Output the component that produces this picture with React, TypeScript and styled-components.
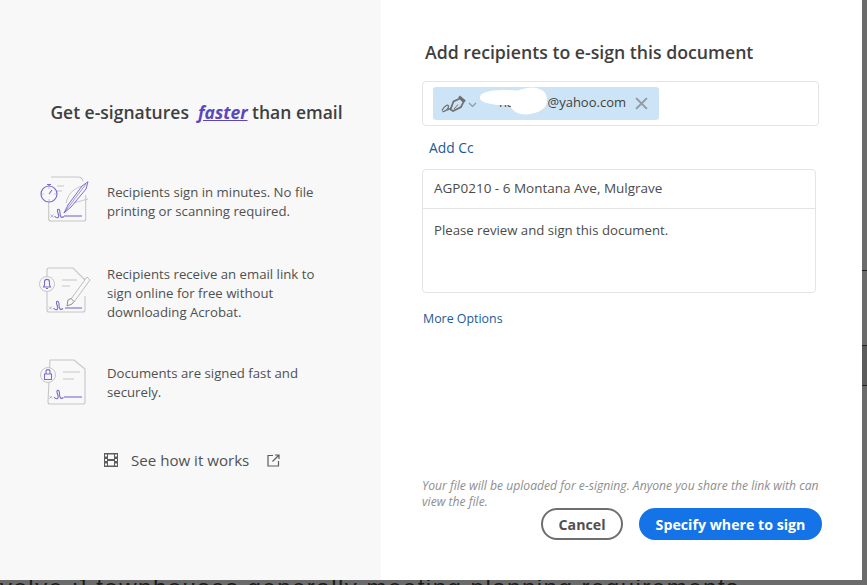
import React from "react";
import styled, { createGlobalStyle } from "styled-components";

const GlobalStyle = createGlobalStyle`
  html, body {
    margin: 0;
    padding: 0;
    height: 585px;
    overflow: hidden;
    background: #6b6b6b;
    font-family: "Open Sans", "Noto Sans", "Liberation Sans", sans-serif;
  }
  * { box-sizing: border-box; }
`;

const Page = styled.div`
  width: 867px;
  height: 585px;
  overflow: hidden;
  display: flex;
  flex-direction: column;
`;

const TopRow = styled.div`
  display: flex;
  height: 580px;
  flex: none;
`;

const Dialog = styled.div`
  width: 862px;
  display: flex;
`;

const Strip = styled.div`
  flex: 1;
  display: flex;
  flex-direction: column;
`;

const StripPart = styled.div<{ $h: number; $dark?: boolean }>`
  height: ${(p) => p.$h}px;
  flex: none;
  background: ${(p) => (p.$dark ? "#5c5c5c" : "#6b6b6b")};
  border-bottom: 1px solid #222;
`;

const BehindText = styled.div`
  height: 5px;
  flex: none;
  overflow: hidden;
  font-family: "Liberation Sans", sans-serif;
  font-size: 24px;
  line-height: 16px;
  letter-spacing: 1.5px;
  white-space: nowrap;
  color: #1c1c1c;
`;

const Left = styled.div`
  width: 381px;
  background: #f8f8f8;
  padding-top: 100px;
  display: flex;
  flex-direction: column;
`;

const Pitch = styled.h2`
  margin: 0 0 49px;
  text-align: center;
  font-size: 17.5px;
  line-height: 24px;
  font-weight: 600;
  color: #3f3f3f;
  padding-left: 12px;
  white-space: pre;

  em {
    color: #5a46c0;
    text-decoration: underline;
    font-weight: 700;
  }
`;

const Benefits = styled.div`
  display: flex;
  flex-direction: column;
  padding-left: 40px;
`;

const Benefit = styled.div<{ $h: number }>`
  display: flex;
  gap: 17px;
  height: ${(p) => p.$h}px;
`;

const BenefitIcon = styled.svg`
  width: 50px;
  height: 50px;
  flex: none;
  fill: none;
  overflow: visible;
`;

const BenefitText = styled.p<{ $top: number }>`
  margin: 0;
  padding-top: ${(p) => p.$top}px;
  width: 225px;
  font-size: 13.2px;
  line-height: 19.2px;
  color: #505050;
`;

const Watch = styled.div`
  display: flex;
  align-items: center;
  margin: 15px 0 0 104px;
  height: 24px;
  font-size: 15.1px;
  color: #505050;
`;

const WatchLabel = styled.span`
  margin: 0 18px 0 13px;
`;

const Right = styled.div`
  flex: 1;
  background: #fff;
  padding: 40px 0 0 41px;
  display: flex;
  flex-direction: column;
`;

const Title = styled.h1`
  margin: 0 0 17px 3px;
  font-size: 17.7px;
  line-height: 24px;
  font-weight: 600;
  color: #3f3f3f;
`;

const RecipientBox = styled.div`
  width: 397px;
  height: 45px;
  border: 1px solid #e4e4e4;
  border-radius: 4px;
  padding: 5px 10px;
`;

const Chip = styled.div`
  position: relative;
  width: 226px;
  height: 33px;
  border-radius: 3px;
  background: #cde4f7;
  display: flex;
  align-items: center;
  padding-left: 8px;
  font-size: 13px;
  color: #3f3f3f;
`;

const ChipEmail = styled.span`
  margin: 0 0 3px 4px;
  width: 145px;
  padding-left: 18px;
  display: flex;
  justify-content: space-between;
`;

const Redaction = styled.div<{ $x: number; $y: number; $w: number; $h: number; $tilt?: number }>`
  position: absolute;
  left: ${(p) => p.$x}px;
  top: ${(p) => p.$y}px;
  width: ${(p) => p.$w}px;
  height: ${(p) => p.$h}px;
  background: #fff;
  border-radius: 45%;
  transform: rotate(${(p) => p.$tilt ?? 0}deg);
`;

const LinkText = styled.a<{ $ml: number; $mt: number; $size: number }>`
  display: block;
  margin: ${(p) => p.$mt}px 0 0 ${(p) => p.$ml}px;
  font-size: ${(p) => p.$size}px;
  line-height: 18px;
  color: #1a5a96;
`;

const MessageBox = styled.div`
  margin-top: 12px;
  width: 394px;
  height: 124px;
  border: 1px solid #e4e4e4;
  border-radius: 4px;
  line-height: 18px;
  color: #4b4b4b;
`;

const Subject = styled.div`
  height: 39px;
  padding: 9px 11px 0;
  font-size: 13.5px;
  border-bottom: 1px solid #e4e4e4;
`;

const Message = styled.div`
  padding: 12px 11px 0;
  font-size: 13.2px;
`;

const Footer = styled.div`
  margin-top: auto;
  padding-bottom: 40px;
`;

const Notice = styled.p`
  margin: 0;
  width: 400px;
  font-size: 12.15px;
  line-height: 16px;
  font-style: italic;
  color: #8e8e8e;
`;

const Actions = styled.div`
  display: flex;
  gap: 16px;
  margin: -2px 0 0 119px;
`;

const Button = styled.button<{ $primary?: boolean }>`
  height: 32px;
  padding: 0;
  width: ${(p) => (p.$primary ? 183 : 82)}px;
  border-radius: 16px;
  border: 2px solid ${(p) => (p.$primary ? "#1473e6" : "#6e6e6e")};
  background: ${(p) => (p.$primary ? "#1473e6" : "#fff")};
  color: ${(p) => (p.$primary ? "#fff" : "#505050")};
  font-family: inherit;
  font-size: 14.2px;
  font-weight: 700;
`;

const PURPLE = "#7a6bd0";
const GREY = "#c6c6c6";

const StopwatchIcon = () => (
  <BenefitIcon viewBox="0 0 50 50">
    <path d="M11 4 H38 Q42 4 43 8 M45.7 22 V46 Q45.7 48 43.7 48 H10.7 Q8.7 48 8.7 46 V28" stroke={GREY} strokeWidth="1.1" />
    <path d="M17 13 H24 M17 18 H22" stroke={GREY} />
    <path d="M10.5 41.5 l3 3 M13.5 41.5 l-3 3" stroke="#aaa" strokeWidth="0.8" />
    <path d="M14.5 43 C17 46 20 45 18 40 C16 35 20 35 20 40 C20 45 22 45 24 43.5" stroke={PURPLE} strokeWidth="1.1" />
    <path d="M24 43 H42" stroke={PURPLE} strokeWidth="1.1" />
    <path d="M26 30 C28 22 32 16 42 13" stroke={GREY} />
    <path d="M27 32 C34 30 40 28 48 26" stroke={GREY} />
    <path d="M24 40 L28 32 L42 13 L48 8.7 L46 16 L31 34 Z" fill="#f8f8f8" stroke={PURPLE} />
    <path d="M24 40 L46 11" stroke={PURPLE} strokeWidth="0.7" />
    <circle cx="9" cy="21" r="8" stroke={PURPLE} strokeWidth="1.2" fill="#f8f8f8" />
    <path d="M9 21 L12 17 M7 11.5 H11 M9 11.5 V13" stroke={PURPLE} strokeWidth="1.1" />
    <path d="M9 14.5 V15.5 M9 26.5 V27.5 M2.5 21 H3.5 M14.5 21 H15.5" stroke={PURPLE} strokeWidth="0.8" />
  </BenefitIcon>
);

const BellIcon = () => (
  <BenefitIcon viewBox="0 0 50 50">
    <path d="M9 5 H33 L45 17 M45 33 V47 Q45 49 43 49 H9 Q7 49 7 47 V29 M7 13 V7 Q7 5 9 5" stroke={GREY} strokeWidth="1.1" />
    <path d="M22 17 H37 M22 23 H30" stroke={GREY} />
    <circle cx="7" cy="21" r="7.5" stroke={GREY} fill="#f8f8f8" />
    <path d="M3.5 24 H10.5 L9.5 22 V19 C9.5 15.5 4.5 15.5 4.5 19 V22 Z M6 25.5 H8" stroke={PURPLE} strokeWidth="1.1" />
    <path d="M9 43.5 l3 3 M12 43.5 l-3 3" stroke="#aaa" strokeWidth="0.8" />
    <path d="M13.5 45 C16 48 19 47 17 42 C15 37 19 37 19 42 C19 47 21 47 23 45.5" stroke={PURPLE} strokeWidth="1.1" />
    <path d="M25 45 H42" stroke={PURPLE} strokeWidth="1.1" />
    <path d="M31 36 L47 14 L50 17 L34 39 Z" fill="#f8f8f8" stroke="#bdbdbd" />
    <path d="M27 43 L28 37 L31 35.5 L34 38.5 L32 41 Z" fill="#f8f8f8" stroke="#8d8d8d" />
  </BenefitIcon>
);

const LockIcon = () => (
  <BenefitIcon viewBox="0 0 50 50">
    <path d="M10 4 H34 L45 13 V46 Q45 48 43 48 H10 Q8 48 8 46 Z" stroke={GREY} strokeWidth="1.1" />
    <path d="M23 16 H40 M23 23 H34" stroke={GREY} />
    <circle cx="8" cy="19" r="7.5" stroke={GREY} fill="#f8f8f8" />
    <path d="M4.5 18 H11.5 V23.5 H4.5 Z M6 18 V15.5 C6 13 10 13 10 15.5 V18" stroke={PURPLE} strokeWidth="1.1" />
    <path d="M9.5 40 l2.5 2.5 M12 40 l-2.5 2.5" stroke="#aaa" strokeWidth="0.8" />
    <path d="M14 41 C16.5 44 19.5 43 17.5 38 C15.5 33 19.5 33 19.5 38 C19.5 43 21.5 43 23.5 41.5" stroke={PURPLE} strokeWidth="1.1" />
    <path d="M24 41 H42" stroke={PURPLE} strokeWidth="1.1" />
  </BenefitIcon>
);

const PenIcon = () => (
  <svg width="36" height="18" viewBox="0 0 36 18" fill="none" stroke="#6f6f6f" style={{ flex: "none" }}>
    <path d="M1 15.5 C3 11 7.5 8.5 7.5 11.5 C7.5 14.5 3.5 17 1.5 16.5 M6 15 C8 15 9 13 10 13" strokeWidth="1.3" />
    <path d="M9.5 14.5 L12.5 6.5 L19 3.5 L22.5 7 L20 12 L12 16 Z" strokeWidth="1.7" />
    <path d="M18 1.5 L24 6.5" strokeWidth="2.6" />
    <path d="M13 14 L17 9.5" strokeWidth="1" />
    <path d="M28 8 L31.5 11.5 L35 8" strokeWidth="1.2" stroke="#8b98a3" />
  </svg>
);

const CloseIcon = () => (
  <svg width="13" height="13" viewBox="0 0 12 12" stroke="#8f9aa3" strokeWidth="1.8" style={{ flex: "none", marginLeft: 9 }}>
    <path d="M1 1 L11 11 M11 1 L1 11" />
  </svg>
);

const FilmIcon = () => (
  <svg width="14" height="14" viewBox="0 0 14 14">
    <path fillRule="evenodd" fill="#5c5c5c" d="M0 0 H14 V14 H0 Z M4 1.5 V6 H10 V1.5 Z M4 8 V12.5 H10 V8 Z M1 1.5 V3.5 H3 V1.5 Z M1 6 V8 H3 V6 Z M1 10.5 V12.5 H3 V10.5 Z M11 1.5 V3.5 H13 V1.5 Z M11 6 V8 H13 V6 Z M11 10.5 V12.5 H13 V10.5 Z" />
  </svg>
);

const ExternalIcon = () => (
  <svg width="13" height="13" viewBox="0 0 13 13" fill="none" stroke="#5c5c5c" strokeWidth="1.2">
    <path d="M6 1.5 H1 V12 H11.5 V7" />
    <path d="M5.5 7.5 L12 1 M8 1 H12 V5" />
  </svg>
);

export default function App() {
  return (
    <Page>
      <GlobalStyle />
      <TopRow>
        <Dialog>
          <Left>
            <Pitch>
              Get e-signatures  <em>faster</em> than email
            </Pitch>
            <Benefits>
              <Benefit $h={90}>
                <StopwatchIcon />
                <BenefitText $top={10}>Recipients sign in minutes. No file printing or scanning required.</BenefitText>
              </Benefit>
              <Benefit $h={93}>
                <BellIcon />
                <BenefitText $top={2}>Recipients receive an email link to sign online for free without downloading Acrobat.</BenefitText>
              </Benefit>
              <Benefit $h={77}>
                <LockIcon />
                <BenefitText $top={8}>Documents are signed fast and securely.</BenefitText>
              </Benefit>
            </Benefits>
            <Watch>
              <FilmIcon />
              <WatchLabel>See how it works</WatchLabel>
              <ExternalIcon />
            </Watch>
          </Left>
          <Right>
            <Title>Add recipients to e-sign this document</Title>
            <RecipientBox>
              <Chip>
                <PenIcon />
                <ChipEmail>
                  <span>ha</span>
                  <span>@yahoo.com</span>
                </ChipEmail>
                <CloseIcon />
                <Redaction $x={47} $y={3} $w={50} $h={15} />
                <Redaction $x={77} $y={1} $w={37} $h={26} $tilt={-8} />
              </Chip>
            </RecipientBox>
            <LinkText $ml={7} $mt={13} $size={13.8}>Add Cc</LinkText>
            <MessageBox>
              <Subject>AGP0210 - 6 Montana Ave, Mulgrave</Subject>
              <Message>Please review and sign this document.</Message>
            </MessageBox>
            <LinkText $ml={1} $mt={17} $size={12.4}>More Options</LinkText>
            <Footer>
              <Notice>Your file will be uploaded for e-signing. Anyone you share the link with can view the file.</Notice>
              <Actions>
                <Button>Cancel</Button>
                <Button $primary>Specify where to sign</Button>
              </Actions>
            </Footer>
          </Right>
        </Dialog>
        <Strip>
          <StripPart $h={271} />
          <StripPart $h={75} />
          <StripPart $h={40} $dark />
        </Strip>
      </TopRow>
      <BehindText>volve :] townhouses generally meeting planning requirements</BehindText>
    </Page>
  );
}
